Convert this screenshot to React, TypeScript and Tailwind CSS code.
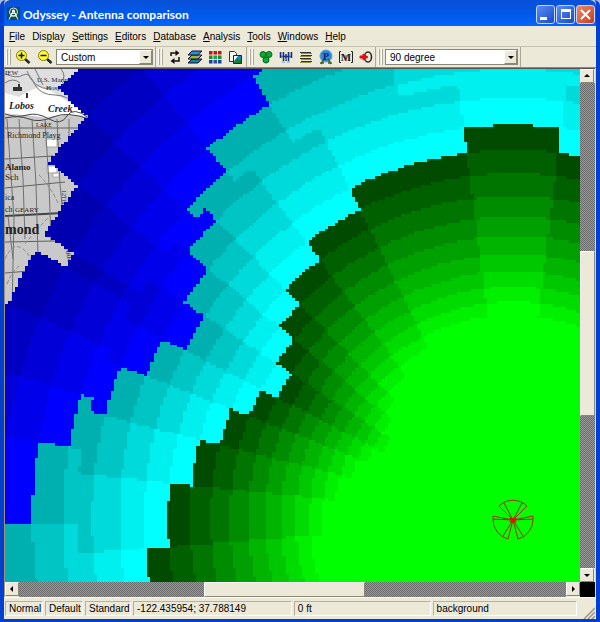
import clsx from "clsx";
import type { ReactNode } from "react";

const MENU = [
  { label: "File", key: 0 },
  { label: "Display", key: 3 },
  { label: "Settings", key: 0 },
  { label: "Editors", key: 0 },
  { label: "Database", key: 0 },
  { label: "Analysis", key: 0 },
  { label: "Tools", key: 0 },
  { label: "Windows", key: 0 },
  { label: "Help", key: 0 },
];

/* ---------- coverage plot ---------- */

const MAP_W = 575;
const MAP_H = 513;
const SITE = { x: 508, y: 450 };
const RING = 0.936; // each signal level is this much closer than the previous one
const BASE = 394; // outer green radius on boresight
const BREAK = 437; // beyond this range the coarse outer bins are used
const CELL_W = 3.3;
const CELL_H = 2.9;

// [bearing west of north where the bin ends, levels lost in the bin]
const NEAR_BINS = [
  [-7, 1], [7.2, 0], [26.3, 1], [36.7, 2], [44.8, 3], [50.6, 4], [56.6, 5], [62.8, 6],
  [68.7, 5], [75.8, 4], [84, 3], [94.6, 2], [180, 1],
];
const FAR_BINS = [
  [15, 0], [30.4, 1], [39.5, 2], [46.6, 3], [52.5, 4], [58.8, 5], [60.6, 6],
  [67, 5], [73.9, 4], [80.8, 3], [90.7, 2], [180, 1],
];

const COLORS = [
  "#00ff00", "#00f000", "#00dc00", "#00c800", "#00b400", "#00a000", "#008c00", "#007600", "#006000", "#004b00",
  "#00ffff", "#00efef", "#00dada", "#00c5c5", "#00b0b0",
  "#0000ff", "#0000eb", "#0000d7", "#0000c3", "#0000b0",
];

function levelAt(x: number, y: number) {
  const dx = SITE.x - x;
  const dy = SITE.y - y;
  const r = Math.hypot(dx, dy);
  const bearing = (Math.atan2(dx, dy) * 180) / Math.PI;
  if (r < 120) return 0;
  const bins = r > BREAK ? FAR_BINS : NEAR_BINS;
  const bin = bearing < -100 ? bins[bins.length - 1] : bins.find(([end]) => bearing < end);
  const loss = bin ? bin[1] : 1;
  const rings = Math.floor(Math.log(r / BASE) / -Math.log(RING));
  return Math.max(0, 10 + loss + rings);
}

function buildCoverage() {
  const paths = COLORS.map(() => "");
  const rows = Math.ceil(MAP_H / CELL_H);
  const cols = Math.ceil(MAP_W / CELL_W);
  for (let j = 0; j < rows; j++) {
    let start = 0;
    let current = levelAt(CELL_W / 2, (j + 0.5) * CELL_H);
    for (let i = 1; i <= cols; i++) {
      const next = i < cols ? levelAt((i + 0.5) * CELL_W, (j + 0.5) * CELL_H) : -1;
      if (next === current) continue;
      if (current < COLORS.length) {
        const y0 = Math.round(j * CELL_H);
        const y1 = Math.round((j + 1) * CELL_H);
        const x0 = Math.round(start * CELL_W);
        const x1 = Math.round(i * CELL_W);
        paths[current] += `M${x0} ${y0}H${x1}V${y1}H${x0}Z`;
      }
      start = i;
      current = next;
    }
  }
  return paths;
}

const COVERAGE = buildCoverage();

function StreetMap() {
  return (
    <g fill="none" stroke="#505050" strokeWidth="1">
      <rect width="100" height="240" fill="#c9c9c9" stroke="none" />
      <path d="M0 0H100V47L80 48 60 46 40 49 20 46 0 47Z" fill="#dedede" stroke="none" />
      <path d="M0 24L14 28 24 22 34 18 46 22 60 31 84 46 60 46 40 48 0 44Z" fill="#fff" stroke="none" />
      <path d="M41 70h11v8H41zM42 97h10v7H42zM48 104h6v4h-6z" fill="#fff" stroke="#aaa" />
      <path d="M0 5Q12 10 18 6T30 16Q36 26 50 26T76 40L84 47M56 0Q62 8 56 12Q66 22 72 26M22 2Q28 20 46 20M30 0L38 16M0 14Q8 8 15 14M62 20Q68 16 74 18" stroke="#777" />
      <path d="M0 45Q12 49 22 46T44 50 62 47 84 49M0 49Q14 46 24 50T48 48 84 50" stroke="#444" />
      <path d="M0 59H80M0 90L48 87M0 119L60 113M0 173L50 172M0 204L24 202" stroke="#606060" />
      <path d="M0 147L58 144" stroke="#444" strokeWidth="2" />
      <path d="M2 50L9 150 7 240M14 50L18 110 20 170M27 50L31 115 33 187M40 50L44 115 46 172M52 50L55 115 58 146M3 147L8 190M64 50V76" stroke="#707070" />
      <path d="M0 190Q8 172 18 180T26 198M2 215Q8 200 16 196M34 106Q46 118 54 136M20 175Q32 160 44 148" stroke="#8a8a8a" strokeDasharray="4 2" />
      <path d="M8 18h5v-3h2v3h2v4H8zM21 24h2v5h-2z" fill="#333" stroke="none" />
      <g fill="#222" stroke="none" className="font-['Liberation_Serif',serif]">
        <text x="0" y="6" fontSize="7">IEW</text>
        <text x="32" y="13" fontSize="7">U.S. Marine</text>
        <text x="41" y="21" fontSize="7">Hosp</text>
        <text x="4" y="40" fontSize="10" fontStyle="italic" fontWeight="700">Lobos</text>
        <text x="43" y="43" fontSize="10" fontStyle="italic" fontWeight="700">Creek</text>
        <text x="31" y="58" fontSize="6">LAKE</text>
        <text x="2" y="69" fontSize="8">Richmond Playg</text>
        <text x="0" y="101" fontSize="9" fontWeight="700">Alamo</text>
        <text x="0" y="111" fontSize="9">Sch</text>
        <text x="0" y="131" fontSize="8">ica</text>
        <text x="0" y="143" fontSize="8">ch</text>
        <text x="10" y="143" fontSize="7">GEARY</text>
        <text x="0" y="165" fontSize="14" fontWeight="700">mond</text>
        <text x="57" y="121" fontSize="6" transform="rotate(90 57 121)">12TH</text>
        <text x="60" y="177" fontSize="6" transform="rotate(80 60 177)">PARK</text>
      </g>
    </g>
  );
}

function Coverage() {
  return (
    <svg viewBox={`0 0 ${MAP_W} ${MAP_H}`} preserveAspectRatio="xMaxYMin slice"
      className="absolute inset-0 h-full w-full" role="img" aria-label="Antenna coverage map">
      <StreetMap />
      <g shapeRendering="crispEdges">
        {COVERAGE.map((d, i) => <path key={i} d={d} fill={COLORS[i]} />)}
      </g>
      <g transform="translate(508 451)" fill="none" stroke="#a03000" strokeWidth="1">
        <path d="M0 0L-14 -14A20 20 0 0 1 14 -14L0 0L-9 -17M0 0L9 -17" />
        <path d="M0 0L-20 -4V0A20 20 0 0 0 -5 19L0 0L-10 16M0 0L-20 -1" />
        <path d="M0 0L20 -4V0A20 20 0 0 1 5 19L0 0L10 16M0 0L20 -1" />
        <path d="M-3 -2L3 2M3 -2L-3 2" stroke="#ff0000" strokeWidth="2" />
      </g>
    </svg>
  );
}

/* ---------- icons ---------- */

function Icon({ children }: { children: ReactNode }) {
  return <svg width="16" height="16" viewBox="0 0 16 16" aria-hidden="true">{children}</svg>;
}

function Magnifier({ plus }: { plus?: boolean }) {
  return (
    <Icon>
      <path d="M10 10l4.500 4" stroke="#222" strokeWidth="2.500" />
      <circle cx="6.500" cy="6.500" r="5" fill="#ffff30" stroke="#8a7a00" />
      <path d={plus ? "M3.500 6.500h6M6.500 3.500v6" : "M3.500 6.500h6"} stroke="#111" strokeWidth="1.500" />
    </Icon>
  );
}

const PALETTE = ["#c01818", "#c01818", "#c01818", "#109030", "#20a040", "#109030", "#2040a0", "#2050b0", "#2040a0"];

const VIEW_TOOLS = [
  {
    label: "Refresh",
    icon: (
      <Icon>
        <path d="M4 7V4h6M12 8v4H6" fill="none" stroke="#111" strokeWidth="1.500" />
        <path d="M8.500 1l4 3-4 3zM7.500 9l-4 3 4 3z" fill="#111" />
      </Icon>
    ),
  },
  {
    label: "Layers",
    icon: (
      <Icon>
        <path d="M5 10h10l-4 4H1z" fill="#1880a0" stroke="#113" />
        <path d="M5 6h10l-4 4H1z" fill="#98b828" stroke="#113" />
        <path d="M5 2h10l-4 4H1z" fill="#2890d8" stroke="#113" />
      </Icon>
    ),
  },
  {
    label: "Colors",
    icon: (
      <Icon>
        {PALETTE.map((c, i) => (
          <rect key={i} x={2 + (i % 3) * 4.5} y={2 + Math.floor(i / 3) * 4.5} width="3.500" height="3.500" fill={c} />
        ))}
      </Icon>
    ),
  },
  {
    label: "Copy map",
    icon: (
      <Icon>
        <path d="M2.500 2.500h5l2 2v8h-7z" fill="#fff" stroke="#333" />
        <path d="M6.500 6.500h8v8h-8z" fill="#2080c8" stroke="#223" />
        <path d="M7 14l3-5 2 2 2-1v4z" fill="#108030" />
        <path d="M7 7h4l-4 5z" fill="#fff" />
      </Icon>
    ),
  },
];

const ANALYSIS_TOOLS = [
  {
    label: "Cells",
    icon: (
      <Icon>
        <g fill="#10a828" stroke="#063">
          <circle cx="5" cy="5.500" r="3" /><circle cx="11" cy="5.500" r="3" /><circle cx="8" cy="11" r="3" />
        </g>
      </Icon>
    ),
  },
  {
    label: "Antennas",
    icon: (
      <Icon>
        <path d="M2.500 3v6M5.500 3v9M10.500 3v9M13.500 3v6M8 5v7M3 7.500h10" fill="none" stroke="#18306c" strokeWidth="1.500" />
        <path d="M4 3v5M12 3v5M7 10h2M4 13h3M9 13h3" stroke="#6898d8" />
      </Icon>
    ),
  },
  {
    label: "Report",
    icon: (
      <Icon>
        <path d="M2 3.500h11M3 6.500h11M2 9.500h11M3 12.500h11" stroke="#333" />
        <path d="M3 4.500h11M2 7.500h11M3 10.500h11M2 13.500h11" stroke="#909040" />
      </Icon>
    ),
  },
  {
    label: "Prediction",
    icon: (
      <Icon>
        <circle cx="8" cy="7" r="6" fill="#3088d8" stroke="#5aa0d0" />
        <path d="M3 15l3-5M13 15l-3-5M2 14h4M10 14h4" stroke="#406030" strokeWidth="1.500" />
        <text x="8" y="11" textAnchor="middle" fontSize="10" fontWeight="700" fill="#102070"
          className="font-['Liberation_Serif',serif]">P</text>
      </Icon>
    ),
  },
  {
    label: "Measurements",
    icon: (
      <Icon>
        <path d="M3 2.500H1.500v11H3M13 2.500h1.500v11H13" fill="none" stroke="#222" />
        <path d="M8 6v6" stroke="#c02020" />
        <text x="8" y="12" textAnchor="middle" fontSize="11" fontWeight="700" fill="#222"
          className="font-['Liberation_Serif',serif]">M</text>
      </Icon>
    ),
  },
  {
    label: "Go to site",
    icon: (
      <Icon>
        <ellipse cx="10" cy="8" rx="3.500" ry="5" fill="none" stroke="#222" strokeWidth="1.500" />
        <path d="M2 7h3V5l5 3-5 3V9H2z" fill="#e01010" stroke="#e01010" />
      </Icon>
    ),
  },
];

function Triangle({ points }: { points: string }) {
  return (
    <svg width="8" height="8" viewBox="0 0 8 8" aria-hidden="true">
      <polygon points={points} fill="#000" />
    </svg>
  );
}

/* ---------- window parts ---------- */

function TitleBar() {
  const box = "flex h-[19px] w-[19px] items-center justify-center rounded-[3px] border border-[#c4d8fa]";
  return (
    <header className="flex h-[26px] shrink-0 items-center rounded-t-md bg-linear-to-b from-[#0a50d8] via-[#0058e8] to-[#0464fc] pr-px pl-[3px]">
      <svg width="13" height="13" viewBox="0 0 13 13" aria-hidden="true">
        <rect width="13" height="13" fill="#134c4c" />
        <circle cx="6.500" cy="5" r="4" fill="none" stroke="#d8e8e0" />
        <path d="M6.500 3L2 12.500M6.500 3L11 12.500M3.500 9h6M4.500 6.500h4" stroke="#fff" />
        <circle cx="6.500" cy="4" r="1.500" fill="#fff" />
      </svg>
      <h1 className="ml-[3px] grow truncate pt-1 font-['Lato',sans-serif] text-[12px] leading-4 font-bold text-white">
        Odyssey - Antenna comparison
      </h1>
      <div className="flex gap-px pt-[2px]">
        <button type="button" aria-label="Minimize" className={clsx(box, "bg-linear-to-br from-[#5c8cf4] to-[#1848c8]")}>
          <span className="mt-2 mr-1 h-[3px] w-[7px] bg-white" />
        </button>
        <button type="button" aria-label="Maximize" className={clsx(box, "bg-linear-to-br from-[#5c8cf4] to-[#1848c8]")}>
          <span className="h-[10px] w-[10px] border border-t-[3px] border-white" />
        </button>
        <button type="button" aria-label="Close" className={clsx(box, "bg-linear-to-br from-[#f08868] to-[#c83810]")}>
          <svg width="11" height="11" viewBox="0 0 11 11" aria-hidden="true">
            <path d="M1 1l9 9M10 1l-9 9" stroke="#fff" strokeWidth="2" />
          </svg>
        </button>
      </div>
    </header>
  );
}

function MenuBar() {
  return (
    <nav className="flex h-[21px] shrink-0 items-center gap-[7px] border-b border-[#c5c2b0] pl-[5px]">
      {MENU.map(({ label, key }) => (
        <button key={label} type="button">
          {label.slice(0, key)}
          <span className="underline">{label[key]}</span>
          {label.slice(key + 1)}
        </button>
      ))}
    </nav>
  );
}

function Grip() {
  return (
    <div className="mr-[2px] flex h-4 gap-px">
      <span className="w-[2px] border-r border-l border-r-[#aca899] border-l-white" />
      <span className="w-[2px] border-r border-l border-r-[#aca899] border-l-white" />
    </div>
  );
}

function DropDown({ label, value }: { label: string; value: string }) {
  return (
    <div className="relative mr-[2px] h-4 grow">
      <select aria-label={label} defaultValue={value}
        className="block h-4 w-full appearance-none border border-[#8a8776] bg-white pl-1 leading-[13px]">
        <option>{value}</option>
      </select>
      <span className="pointer-events-none absolute top-px right-px flex h-[14px] w-[13px] items-center justify-center border border-white border-r-[#8a8776] border-b-[#8a8776] bg-[#ece9d8]">
        <Triangle points="1,3 7,3 4,6" />
      </span>
    </div>
  );
}

function ToolButton({ label, children }: { label: string; children: ReactNode }) {
  return (
    <button type="button" aria-label={label} className="flex h-5 w-5 shrink-0 items-center justify-center">
      {children}
    </button>
  );
}

function Toolbar() {
  const group = "flex h-[20px] items-center border-r border-[#aca899] pl-[2px]";
  return (
    <div className="flex h-[21px] shrink-0 border-b border-[#8a8776]">
      <div className={clsx(group, "w-[152px]")}>
        <Grip />
        <div className="mr-px flex gap-[2px]">
          <ToolButton label="Zoom in"><Magnifier plus /></ToolButton>
          <ToolButton label="Zoom out"><Magnifier /></ToolButton>
        </div>
        <DropDown label="Zoom level" value="Custom" />
      </div>
      <div className={clsx(group, "w-[91px]")}>
        <Grip />
        {VIEW_TOOLS.map(({ label, icon }) => <ToolButton key={label} label={label}>{icon}</ToolButton>)}
      </div>
      <div className={clsx(group, "w-[129px]")}>
        <Grip />
        {ANALYSIS_TOOLS.map(({ label, icon }) => <ToolButton key={label} label={label}>{icon}</ToolButton>)}
      </div>
      <div className={clsx(group, "w-[145px]")}>
        <Grip />
        <DropDown label="Antenna pattern" value="90 degree" />
      </div>
    </div>
  );
}

function ScrollButton({ label, points }: { label: string; points: string }) {
  return (
    <button type="button" aria-label={label}
      className="flex h-[14px] w-[14px] shrink-0 items-center justify-center border border-white border-r-[#8a8776] border-b-[#8a8776] bg-[#ece9d8]">
      <Triangle points={points} />
    </button>
  );
}

const TRACK = "bg-[repeating-conic-gradient(#6c6c6c_0_25%,#989898_0_50%)] bg-[length:2px_2px] basis-0";
const THUMB = "basis-0 border border-white border-r-[#8a8776] border-b-[#8a8776] bg-[#ece9d8]";

function StatusBar() {
  const cell = "overflow-hidden whitespace-nowrap border border-white border-t-[#b5b2a0] border-l-[#b5b2a0] pl-[3px] h-[15px] leading-[14px]";
  return (
    <footer className="flex h-[22px] shrink-0 items-center gap-[2px] border-t border-white pr-px pl-px">
      <div className={clsx(cell, "w-[38px]")}>Normal</div>
      <div className={clsx(cell, "w-[38px]")}>Default</div>
      <div className={clsx(cell, "w-[46px]")}>Standard</div>
      <div className={clsx(cell, "grow-[160] basis-0")}>-122.435954; 37.788149</div>
      <div className={clsx(cell, "grow-[137] basis-0")}>0 ft</div>
      <div className={clsx(cell, "grow-[145] basis-0")}>background</div>
      <svg width="12" height="12" viewBox="0 0 12 12" className="ml-1 self-end" aria-hidden="true">
        <path d="M1 12L12 1M5 12L12 5M9 12L12 9" stroke="#9a9684" strokeWidth="1.500" />
      </svg>
    </footer>
  );
}

export default function App() {
  return (
    <div className="flex h-screen flex-col bg-[#a8bce8] font-['Liberation_Sans',sans-serif] text-[10px] leading-[13px] text-black">
      <div className="flex min-h-0 grow flex-col rounded-t-md border-r-4 border-b-[3px] border-l-4 border-[#0040d0] bg-[#ece9d8]">
        <TitleBar />
        <MenuBar />
        <Toolbar />
        <main className="flex min-h-0 grow flex-col border-r border-l border-r-[#d8d4c0] border-l-[#a89078]">
          <div className="flex min-h-0 grow border-t border-[#555]">
            <div className="relative grow overflow-hidden">
              <Coverage />
            </div>
            <div className="flex w-[15px] shrink-0 flex-col">
              <ScrollButton label="Scroll up" points="4,2 7,5 1,5" />
              <div className={clsx(TRACK, "grow-[168]")} />
              <div className={clsx(THUMB, "grow-[164]")} />
              <div className={clsx(TRACK, "grow-[152]")} />
              <ScrollButton label="Scroll down" points="1,3 7,3 4,6" />
            </div>
          </div>
          <div className="flex h-[15px] shrink-0">
            <ScrollButton label="Scroll left" points="5,1 5,7 2,4" />
            <div className={clsx(TRACK, "grow-[185]")} />
            <div className={clsx(THUMB, "grow-[160]")} />
            <div className={clsx(TRACK, "grow-[201]")} />
            <ScrollButton label="Scroll right" points="3,1 6,4 3,7" />
            <div className="w-[15px] shrink-0 bg-black" />
          </div>
        </main>
        <StatusBar />
      </div>
    </div>
  );
}
